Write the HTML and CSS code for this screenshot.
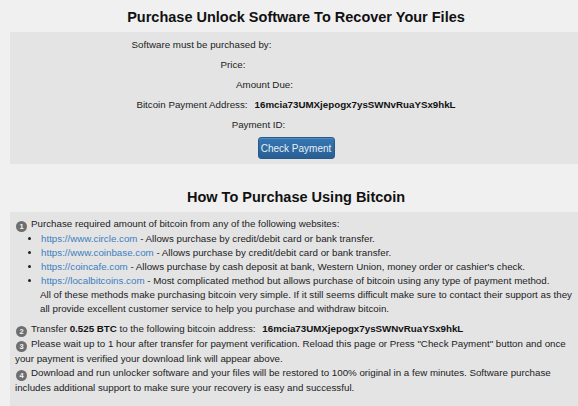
FILE: index.html
```html
<!DOCTYPE html>
<html>
<head>
<meta charset="utf-8">
<link rel="stylesheet" href="styles.css">
</head>
<body>
<div class="page">
  <h1 class="title">Purchase Unlock Software To Recover Your Files</h1>
  <div class="panel info">
    <div class="row"><span class="label">Software must be purchased by:</span><span class="value v-date"></span></div>
    <div class="row"><span class="label">Price:</span><span class="value v-price"></span></div>
    <div class="row"><span class="label">Amount Due:</span><span class="value v-due"></span></div>
    <div class="row"><span class="label">Bitcoin Payment Address:</span><span class="value addr">16mcia73UMXjepogx7ysSWNvRuaYSx9hkL</span></div>
    <div class="row"><span class="label">Payment ID:</span><span class="value v-id"></span></div>
    <div class="btn-row"><button class="btn">Check Payment</button></div>
  </div>
  <h1 class="title second">How To Purchase Using Bitcoin</h1>
  <div class="panel steps">
    <div class="step">
      <div class="line"><span class="badge">1</span><span>Purchase required amount of bitcoin from any of the following websites:</span></div>
      <ul class="sites">
        <li><a class="link">https://www.circle.com</a> - Allows purchase by credit/debit card or bank transfer.</li>
        <li><a class="link">https://www.coinbase.com</a> - Allows purchase by credit/debit card or bank transfer.</li>
        <li><a class="link">https://coincafe.com</a> - Allows purchase by cash deposit at bank, Western Union, money order or cashier's check.</li>
        <li><a class="link">https://localbitcoins.com</a> - Most complicated method but allows purchase of bitcoin using any type of payment method.</li>
      </ul>
      <div class="note">All of these methods make purchasing bitcoin very simple. If it still seems difficult make sure to contact their support as they all provide excellent customer service to help you purchase and withdraw bitcoin.</div>
    </div>
    <div class="step gap"><span class="badge">2</span>Transfer <b>0.525 BTC</b> to the following bitcoin address: <b class="addr2">16mcia73UMXjepogx7ysSWNvRuaYSx9hkL</b></div>
    <div class="step"><span class="badge">3</span>Please wait up to 1 hour after transfer for payment verification. Reload this page or Press "Check Payment" button and once your payment is verified your download link will appear above.</div>
    <div class="step"><span class="badge">4</span>Download and run unlocker software and your files will be restored to 100% original in a few minutes. Software purchase includes additional support to make sure your recovery is easy and successful.</div>
  </div>
</div>
</body>
</html>
```
FILE: styles.css
```css
html, body {
  margin: 0;
  padding: 0;
  overflow: hidden;
  background: #f0f0f0;
}
body {
  font-family: "Liberation Sans", Arial, sans-serif;
  font-size: 9.75px;
  color: #222;
}
.page {
  width: 572px;
  margin-left: 10px;
}
.title {
  margin: 0;
  padding-top: 3px;
  line-height: 29px;
  font-size: 14.5px;
  font-weight: bold;
  text-align: center;
  color: #111;
}
.title.second {
  margin-top: 16px;
}
.panel {
  background: #e4e4e4;
}
.info {
  padding: 3px 0 5px;
}
.row {
  display: flex;
  justify-content: center;
  gap: 7px;
  height: 20px;
  line-height: 20px;
}
.value { display: inline-block; }
.v-date { width: 182px; }
.v-price { width: 119px; }
.v-due { width: 56px; }
.v-id { width: 68px; }
.addr { font-weight: bold; color: #111; }
.btn-row {
  display: flex;
  justify-content: center;
  padding-top: 2px;
}
.btn {
  width: 77px;
  height: 22px;
  padding: 0;
  font-family: inherit;
  font-size: 10px;
  color: #e8eff7;
  background: linear-gradient(#3577b3, #285f93);
  border: 1px solid #275a8a;
  border-radius: 3px;
  box-shadow: inset 0 1px 0 rgba(255,255,255,0.15);
}
.steps {
  padding: 5px 5px 16px;
  line-height: 14px;
}
.badge {
  display: inline-block;
  width: 11px;
  height: 11px;
  line-height: 11px;
  border-radius: 50%;
  background: #6e6e6e;
  color: #f4f4f4;
  font-size: 7.5px;
  font-weight: bold;
  text-align: center;
  vertical-align: -2px;
  margin: 0 4px 0 1px;
}
.sites {
  margin: 0;
  padding-left: 26px;
}
.link {
  color: #3d7fc1;
  text-decoration: none;
}
.note {
  padding-left: 25px;
}
.gap {
  margin-top: 6px;
}
.addr2 {
  margin-left: 4px;
}
b { color: #111; }
```
